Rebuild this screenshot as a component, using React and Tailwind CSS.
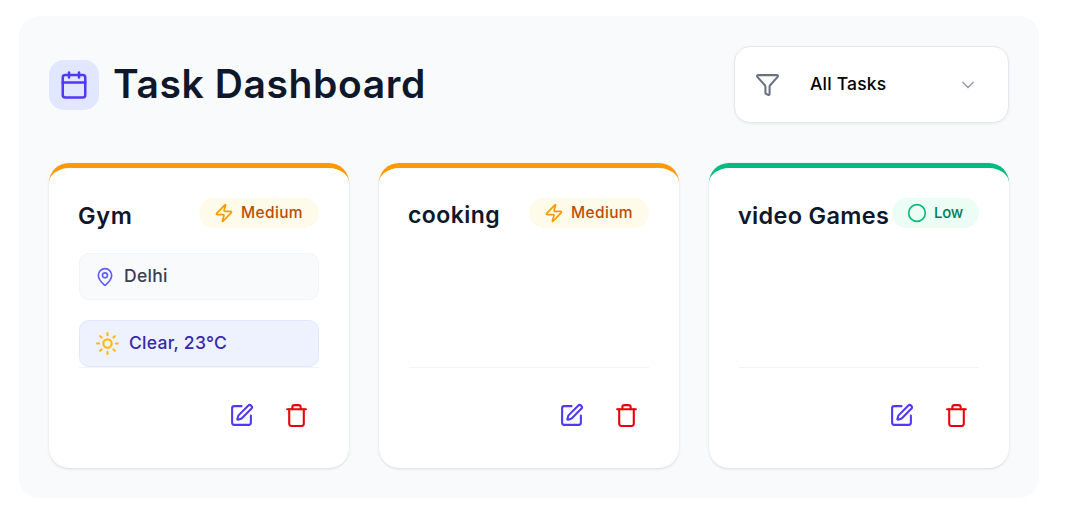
import React from "react";
import { Calendar, ChevronDown, Circle, Funnel, MapPin, SquarePen, Sun, Trash, Zap } from "lucide-react";

const priorities = {
  Medium: {
    border: "border-t-[#fe9a00]",
    badge: "bg-amber-50 text-amber-700",
    icon: <Zap size={20} className="text-[#fe9a00]" />,
    label: "w-[63px] text-[15.5px] tracking-[0.35px]",
  },
  Low: {
    border: "border-t-[#00bc7d]",
    badge: "bg-emerald-50 text-emerald-700",
    icon: <Circle size={20} className="text-[#00bc7d]" />,
    label: "w-[30px] text-[15px] tracking-[-0.3px]",
  },
};

const tasks = [
  { title: "Gym", titleClass: "text-[23.5px] tracking-[0.6px]", priority: "Medium", location: "Delhi", weather: "Clear, 23°C" },
  { title: "cooking", titleClass: "text-[23px] tracking-[0.45px]", priority: "Medium" },
  { title: "video Games", titleClass: "text-[23.5px] tracking-[0.3px]", priority: "Low" },
];

function TaskCard({ task }) {
  const p = priorities[task.priority];
  return (
    <article className={`flex h-[305px] flex-col rounded-[20px] border-t-[5px] bg-white px-[30px] pt-[30px] shadow-[0_1px_3px_rgba(0,0,0,0.1),0_1px_2px_-1px_rgba(0,0,0,0.1)] ${p.border}`}>
      <div className="flex h-[35px] items-start justify-between">
        <h2 className={`-ml-px w-0 whitespace-nowrap leading-[35px] font-semibold text-slate-900 ${task.titleClass}`}>{task.title}</h2>
        <span className={`flex h-[30px] items-center gap-[7.5px] rounded-full px-[15px] font-medium ${p.badge}`}>
          {p.icon}
          <span className={`whitespace-nowrap ${p.label}`}>{task.priority}</span>
        </span>
      </div>
      <div className="flex h-[134px] flex-col gap-5 pt-5">
        {task.location && (
          <div className="flex h-[47px] shrink-0 items-center gap-[9px] rounded-[10px] border border-gray-100 bg-[#f9fafc] px-[15px] text-[17.5px] font-medium text-gray-700">
            <MapPin size={20} className="text-[#615fff]" />
            <span className="tracking-[0.3px]">{task.location}</span>
          </div>
        )}
        {task.weather && (
          <div className="flex h-[47px] shrink-0 items-center gap-[9px] rounded-[10px] border border-indigo-100 bg-indigo-50 px-[15px] text-[17.5px] font-medium text-indigo-800">
            <Sun size={25} className="text-[#ffb900]" />
            <span className="tracking-[0.25px]">{task.weather}</span>
          </div>
        )}
      </div>
      <div className="flex items-center justify-end gap-[30px] border-t border-gray-100 pt-[35px] pr-2.5">
        <button aria-label="Edit task"><SquarePen size={25} className="text-[#4f39f6]" /></button>
        <button aria-label="Delete task"><Trash size={25} className="text-[#e7000b]" /></button>
      </div>
    </article>
  );
}

export default function App() {
  return (
    <div className="h-[526px] bg-white pt-4 pl-[19px] font-['Inter',sans-serif]">
      <main className="h-[482px] w-[1020px] rounded-[20px] bg-[#f9fafc] p-[30px]">
        <header className="flex h-[77px] items-center justify-between">
          <div className="flex items-center gap-[14px]">
            <div className="flex size-[50px] items-center justify-center rounded-[15px] bg-indigo-100">
              <Calendar size={30} className="text-[#4f39f6]" />
            </div>
            <h1 className="whitespace-nowrap pb-0.5 text-[39px] leading-[48px] font-semibold tracking-[0.6px] text-slate-900">Task Dashboard</h1>
          </div>
          <button className="flex h-[77px] w-[275px] items-center rounded-[16px] border border-gray-200 bg-white pr-[30px] pl-5 text-[17.5px] font-medium text-black shadow-[0_1px_3px_rgba(0,0,0,0.06)]">
            <Funnel size={25} className="text-gray-500" />
            <span className="ml-[30px] tracking-[0.2px]">All Tasks</span>
            <ChevronDown size={20} className="ml-auto text-gray-400" />
          </button>
        </header>
        <section className="mt-10 grid grid-cols-3 gap-[30px]">
          {tasks.map((task) => <TaskCard key={task.title} task={task} />)}
        </section>
      </main>
    </div>
  );
}
